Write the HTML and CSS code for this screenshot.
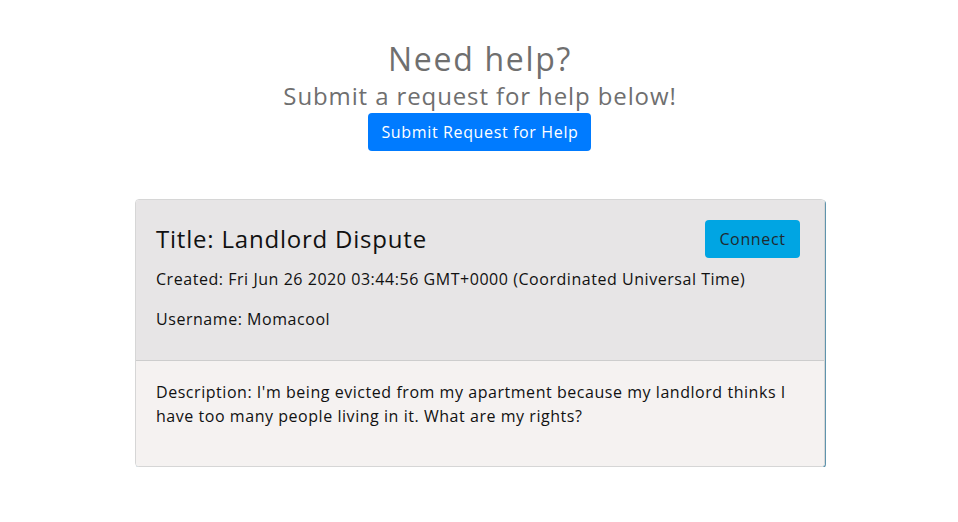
FILE: index.html
```html
<!DOCTYPE html>
<html lang="en">
<head>
<meta charset="utf-8">
<title>Need help?</title>
<link rel="stylesheet" href="styles.css">
</head>
<body>
<main class="page">
  <section class="intro">
    <h1 class="intro-title">Need help?</h1>
    <h2 class="intro-sub">Submit a request for help below!</h2>
    <button class="btn btn-primary">Submit Request for Help</button>
  </section>
  <article class="card">
    <header class="card-header">
      <div class="card-top">
        <h3 class="card-title">Title: Landlord Dispute</h3>
        <button class="btn btn-info">Connect</button>
      </div>
      <p class="meta">Created: Fri Jun 26 2020 03:44:56 GMT+0000 (Coordinated Universal Time)</p>
      <p class="meta">Username: Momacool</p>
    </header>
    <div class="card-body">
      <p class="desc">Description: I'm being evicted from my apartment because my landlord thinks I have too many people living in it. What are my rights?</p>
    </div>
  </article>
</main>
</body>
</html>
```
FILE: styles.css
```css
* { box-sizing: border-box; }
html, body { margin: 0; background: #fff; }
body {
  font-family: "Open Sans", "DejaVu Sans", sans-serif;
  color: #212529;
  letter-spacing: 0.034em;
}
.page {
  display: flex;
  flex-direction: column;
  align-items: center;
  padding: 40px 0 0 2px;
}
.intro {
  display: flex;
  flex-direction: column;
  align-items: center;
}
.intro-title {
  margin: 0;
  font-size: 32px;
  line-height: 38px;
  font-weight: 400;
  color: #6f6f6f;
  letter-spacing: 0.053em;
}
.intro-sub {
  margin: 3px 0 0;
  font-size: 24px;
  line-height: 29px;
  font-weight: 400;
  color: #6f6f6f;
  letter-spacing: 0.037em;
}
.btn {
  font-family: inherit;
  font-size: 16px;
  line-height: 24px;
  letter-spacing: 0.04em;
  padding: 7px 12px;
  border: 0;
  border-radius: 4px;
  cursor: pointer;
}
.btn-primary {
  margin-top: 3px;
  background: #007bff;
  color: #fff;
  width: 223px;
}
.btn-info {
  background: #00a5e3;
  color: #1f2a30;
  width: 95px;
}
.card {
  margin-top: 48px;
  width: 690px;
  border: 1px solid #d6d6d6;
  border-radius: 4px;
  box-shadow: 1px 1px 0 #5f94ad;
  overflow: hidden;
}
.card-header {
  background: #e7e5e6;
  padding: 20px 24px 13px 20px;
  border-bottom: 1px solid #cdcdcd;
}
.card-top {
  display: flex;
  justify-content: space-between;
  align-items: center;
  margin-bottom: 9px;
}
.card-title {
  margin: 0;
  font-size: 24px;
  line-height: 38px;
  font-weight: 400;
  color: #111;
  letter-spacing: 0.033em;
}
.meta {
  margin: 0 0 16px;
  font-size: 16px;
  line-height: 24px;
  color: #111;
}
.card-body {
  background: #f5f2f1;
  padding: 19px 20px 22px;
}
.desc {
  margin: 0 0 16px;
  font-size: 16px;
  line-height: 24px;
  color: #111;
}
```
